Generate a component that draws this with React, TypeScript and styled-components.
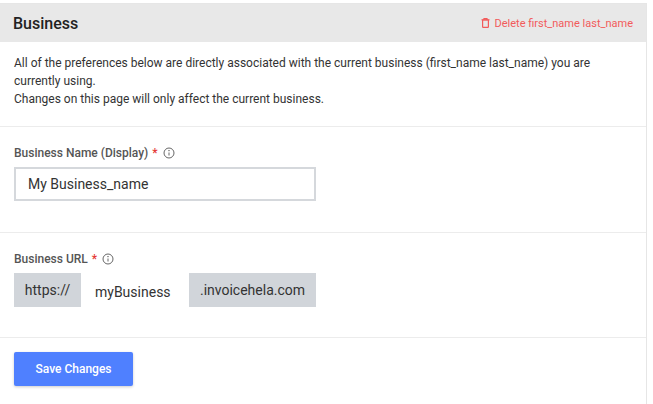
import styled, { createGlobalStyle } from "styled-components";

const Global = createGlobalStyle`
  body { margin: 0; background: #fff; font-family: Roboto, "Liberation Sans", sans-serif; }
`;

const Card = styled.div`
  margin-top: 3px;
  width: 646px;
  border: 1px solid #e6e6e6;
  border-left: none;
  background: #fff;
`;

const Header = styled.div`
  height: 38px;
  background: #e8e8e8;
  display: flex;
  align-items: center;
  justify-content: space-between;
  padding: 0 13px 0 13px;
`;

const Title = styled.h2`
  margin: 0;
  font-size: 16px;
  font-weight: 500;
  color: #222;
`;

const DeleteLink = styled.a`
  display: flex;
  align-items: center;
  gap: 5px;
  font-size: 11px;
  color: #f25b5b;
  cursor: pointer;
`;

const Section = styled.div<{ $pad?: string }>`
  padding: ${(p) => p.$pad || "20px 14px"};
  border-bottom: 1px solid #ececec;
  &:last-child { border-bottom: none; }
`;

const Description = styled.p`
  margin: 0;
  font-size: 12px;
  line-height: 18px;
  color: #333;
`;

const Label = styled.div`
  display: flex;
  align-items: center;
  gap: 5px;
  font-size: 12px;
  font-weight: 500;
  color: #555;
  margin-bottom: 7px;
  span.req { color: #e53935; margin-left: -1px; }
`;

const TextInput = styled.input`
  box-sizing: border-box;
  width: 302px;
  height: 34px;
  border: 2px solid #d5d8dc;
  padding: 0 12px;
  font-family: inherit;
  font-size: 14px;
  color: #333;
  outline: none;
`;

const UrlGroup = styled.div`
  display: flex;
  width: 302px;
  height: 34px;
  background: #d1d5da;
  font-size: 14px;
  color: #333;
`;

const Addon = styled.div<{ $w: number }>`
  width: ${(p) => p.$w}px;
  display: flex;
  align-items: center;
  justify-content: center;
`;

const UrlInput = styled.input`
  box-sizing: border-box;
  width: 108px;
  border: none;
  padding: 4px 0 0 14px;
  font-family: inherit;
  font-size: 14px;
  color: #333;
  outline: none;
`;

const SaveButton = styled.button`
  width: 119px;
  height: 34px;
  border: none;
  border-radius: 2px;
  background: #4f80ff;
  color: #fff;
  font-family: inherit;
  font-size: 12px;
  font-weight: 500;
  box-shadow: 0 1px 3px rgba(0,0,0,0.2);
  cursor: pointer;
`;

const Info = () => (
  <svg width="12" height="12" viewBox="0 0 24 24" fill="none" stroke="#666" strokeWidth="2">
    <circle cx="12" cy="12" r="10" />
    <line x1="12" y1="11" x2="12" y2="17" />
    <circle cx="12" cy="7.5" r="0.6" fill="#666" />
  </svg>
);

export default function App() {
  return (
    <>
      <Global />
      <Card>
        <Header>
          <Title>Business</Title>
          <DeleteLink>
            <svg width="9" height="10" viewBox="0 0 9 10" fill="none" stroke="#f25b5b" strokeWidth="1.2">
              <line x1="0.5" y1="1.8" x2="8.5" y2="1.8" />
              <path d="M3 1.8V0.7h3v1.1" />
              <rect x="1.6" y="2" width="5.8" height="7.4" rx="0.6" />
            </svg>
            Delete first_name last_name
          </DeleteLink>
        </Header>
        <Section $pad="12px 14px 18px">
          <Description>
            All of the preferences below are directly associated with the current business (first_name last_name) you are currently using.
            <br />
            Changes on this page will only affect the current business.
          </Description>
        </Section>
        <Section $pad="19px 14px 31px">
          <Label>Business Name (Display) <span className="req">*</span> <Info /></Label>
          <TextInput defaultValue="My Business_name" />
        </Section>
        <Section $pad="19px 14px 30px">
          <Label>Business URL <span className="req">*</span> <Info /></Label>
          <UrlGroup>
            <Addon $w={67}>https://</Addon>
            <UrlInput defaultValue="myBusiness" />
            <Addon $w={127}>.invoicehela.com</Addon>
          </UrlGroup>
        </Section>
        <Section $pad="14px 14px 20px">
          <SaveButton>Save Changes</SaveButton>
        </Section>
      </Card>
    </>
  );
}
